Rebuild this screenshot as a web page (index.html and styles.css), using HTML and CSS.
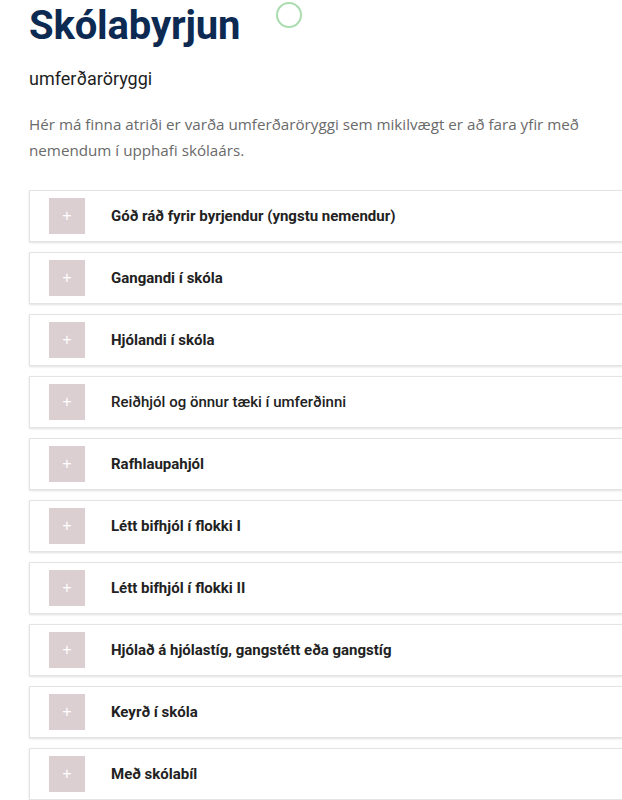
FILE: index.html
```html
<!DOCTYPE html>
<html lang="is">
<head>
<meta charset="utf-8">
<link rel="stylesheet" href="styles.css">
</head>
<body>
<div class="page">
  <span class="cursor-ring"></span>
  <h1 class="title">Skólabyrjun</h1>
  <h2 class="subtitle">umferðaröryggi</h2>
  <p class="intro">Hér má finna atriði er varða umferðaröryggi sem mikilvægt er að fara yfir með nemendum í upphafi skólaárs.</p>
  <div class="accordion">
    <div class="item"><span class="toggle">+</span><span class="label">Góð ráð fyrir byrjendur (yngstu nemendur)</span></div>
    <div class="item"><span class="toggle">+</span><span class="label">Gangandi í skóla</span></div>
    <div class="item"><span class="toggle">+</span><span class="label">Hjólandi í skóla</span></div>
    <div class="item"><span class="toggle">+</span><span class="label light">Reiðhjól og önnur tæki í umferðinni</span></div>
    <div class="item"><span class="toggle">+</span><span class="label">Rafhlaupahjól</span></div>
    <div class="item"><span class="toggle">+</span><span class="label">Létt bifhjól í flokki I</span></div>
    <div class="item"><span class="toggle">+</span><span class="label">Létt bifhjól í flokki II</span></div>
    <div class="item"><span class="toggle">+</span><span class="label">Hjólað á hjólastíg, gangstétt eða gangstíg</span></div>
    <div class="item"><span class="toggle">+</span><span class="label">Keyrð í skóla</span></div>
    <div class="item"><span class="toggle">+</span><span class="label">Með skólabíl</span></div>
  </div>
</div>
</body>
</html>
```
FILE: styles.css
```css
html, body {
  margin: 0;
  padding: 0;
  background: #ffffff;
  overflow: hidden;
}
.page {
  position: relative;
  padding: 0 0 0 29px;
  width: 620px;
}
.cursor-ring {
  position: absolute;
  left: 276px;
  top: 2px;
  width: 22px;
  height: 22px;
  border: 2px solid #a9dcae;
  border-radius: 50%;
}
.title {
  margin: 0;
  padding-top: 2px;
  font-family: Roboto, "Liberation Sans", sans-serif;
  font-weight: 700;
  font-size: 40px;
  line-height: 48px;
  color: #0d2a52;
  letter-spacing: -0.15px;
}
.subtitle {
  margin: 18px 0 0;
  font-family: Roboto, "Liberation Sans", sans-serif;
  font-weight: 400;
  font-size: 18px;
  line-height: 22px;
  color: #1e1e1e;
}
.intro {
  margin: 21px 0 0;
  font-family: "Open Sans", "Liberation Sans", sans-serif;
  font-size: 15.2px;
  line-height: 26px;
  color: #6a6a6a;
  max-width: 570px;
}
.accordion {
  margin-top: 27px;
  display: flex;
  flex-direction: column;
  gap: 10px;
}
.item {
  display: flex;
  align-items: center;
  height: 50px;
  border: 1px solid #e4e4e4;
  border-right: none;
  box-shadow: 0 1px 2px rgba(0, 0, 0, 0.12);
  padding-left: 19px;
  gap: 26px;
}
.toggle {
  width: 36px;
  height: 36px;
  background: #dccfd1;
  color: #ffffff;
  font-family: "Liberation Sans", sans-serif;
  font-size: 16px;
  display: flex;
  align-items: center;
  justify-content: center;
  flex-shrink: 0;
}
.label {
  font-family: Roboto, "Liberation Sans", sans-serif;
  font-weight: 700;
  font-size: 15px;
  color: #222222;
}
.label.light {
  font-weight: 500;
}
```
